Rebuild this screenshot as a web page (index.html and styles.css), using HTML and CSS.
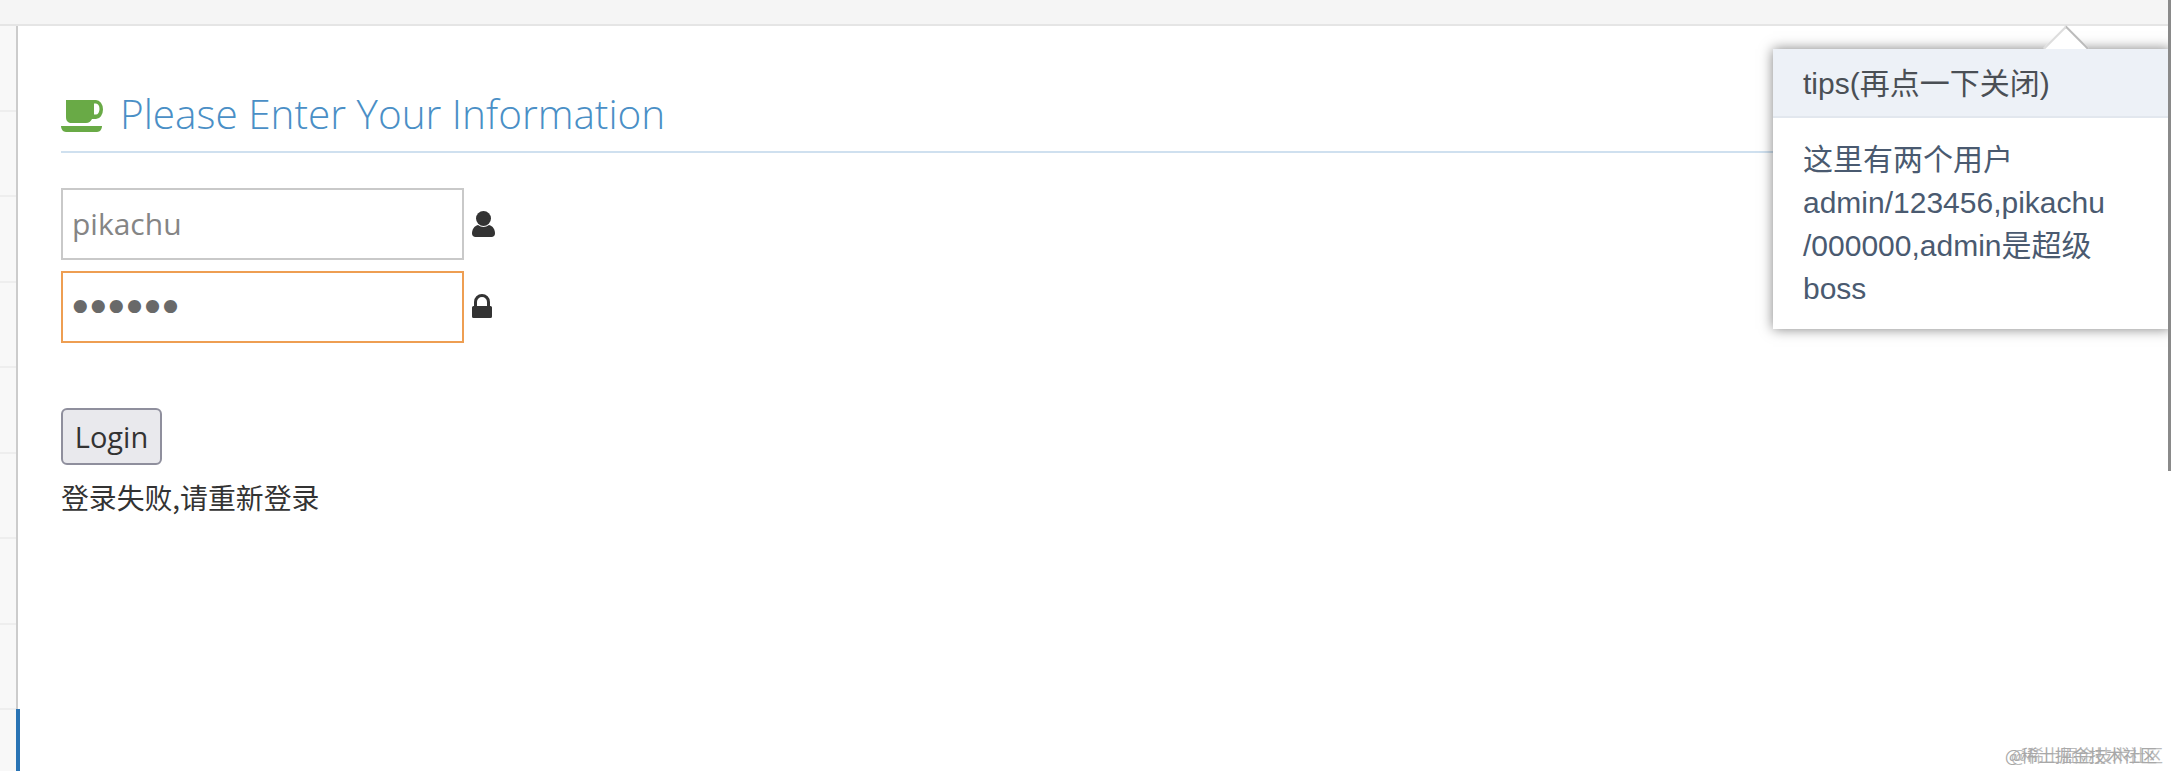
FILE: index.html
```html
<!DOCTYPE html>
<html lang="en">
<head>
  <meta charset="UTF-8">
  <meta name="viewport" content="width=device-width, initial-scale=1.0">
  <title>Login</title>
  <link rel="stylesheet" href="styles.css">
</head>
<body>

<div class="topbar"></div>

<div class="page">
  <div class="sidebar">
    <div class="side-row"></div>
    <div class="side-row"></div>
    <div class="side-row"></div>
    <div class="side-row"></div>
    <div class="side-row"></div>
    <div class="side-row"></div>
    <div class="side-row"></div>
    <div class="side-row"></div>
    <div class="side-active"></div>
  </div>

  <div class="content">
    <h4 class="title">
      <svg class="cup" viewBox="0 0 42 32">
        <path d="M5 0H35a7 9.500 0 0 1 0 19H31c-1.500 2.500-3 4-6 4H11c-4 0-6-2-6-6z M33 3.500V14.500h2a3.500 5.500 0 0 0 0-11z" fill-rule="evenodd"/>
        <path d="M0 26H41c0 3-2 6-5 6H5c-3 0-5-3-5-6z"/>
      </svg>
      <span>Please Enter Your Information</span>
    </h4>

    <form class="login">
      <label class="field">
        <input class="text-input" type="text" value="pikachu">
        <svg class="icon-user" viewBox="0 0 23 26">
          <circle cx="11.500" cy="7.500" r="7.500"/>
          <path d="M6 14c3.500 2.500 7.500 2.500 11 0 4 1 6 4.500 6 8.500 0 2-1.500 3.500-3.500 3.500h-16C1.500 26 0 24.500 0 22.500 0 18.500 2 15 6 14z"/>
        </svg>
      </label>
      <label class="field">
        <input class="text-input password" type="password" value="123456">
        <svg class="icon-lock" viewBox="0 0 20 24">
          <path d="M2 13V8a8 8 0 0 1 16 0v5h-3V8a5 5 0 0 0-10 0v5z"/>
          <path d="M1.500 12h17a1.500 1.500 0 0 1 1.500 1.500v9a1.500 1.500 0 0 1-1.500 1.500h-17A1.500 1.500 0 0 1 0 22.500v-9A1.500 1.500 0 0 1 1.500 12z"/>
        </svg>
      </label>
      <button class="login-btn" type="button">Login</button>
    </form>
    <p class="error">登录失败,请重新登录</p>
  </div>
</div>

<div class="popover">
  <div class="popover-arrow"></div>
  <div class="popover-title">tips(再点一下关闭)</div>
  <div class="popover-body">这里有两个用户admin/123456,pikachu /000000,admin是超级boss</div>
</div>

<div class="scrollbar"></div>

<div class="watermark">@稀土掘金技术社区</div>

</body>
</html>
```

FILE: styles.css
```css
* {
  box-sizing: border-box;
  margin: 0;
  padding: 0;
}

html, body {
  height: 100%;
  overflow: hidden;
}

body {
  background: #fff;
  font-family: "Open Sans", "Noto Sans CJK SC", sans-serif;
  color: #333;
  position: relative;
}

.topbar {
  height: 26px;
  background: #f5f5f5;
  border-bottom: 2px solid #e5e5e5;
}

.page {
  display: flex;
  height: 745px;
}

.sidebar {
  width: 18px;
  flex-shrink: 0;
  background: #f8f8f8;
  border-right: 2px solid #ccc;
  position: relative;
}

.side-row {
  height: 85.500px;
  border-bottom: 2px solid #eee;
}

.side-active {
  position: absolute;
  left: 16px;
  top: 683px;
  bottom: 0;
  width: 4px;
  background: #2a74b5;
}

.content {
  flex: 1;
  padding: 0 43px;
}

.title {
  display: flex;
  align-items: center;
  gap: 17px;
  height: 127px;
  padding-top: 65px;
  padding-bottom: 16px;
  border-bottom: 2px solid #cfe0ef;
  font-weight: 300;
  font-size: 40.500px;
  color: #4a8fc6;
}

.cup {
  width: 42px;
  height: 32px;
  fill: #69aa46;
  margin-top: 6px;
}

.login {
  padding-top: 35px;
}

.field {
  display: flex;
  align-items: center;
  margin-bottom: 11px;
}

.text-input {
  width: 403px;
  height: 72px;
  padding: 0 9px 2px;
  border: 2px solid #c9c9c9;
  background: #fff;
  outline: none;
  font-family: "Open Sans", sans-serif;
  font-size: 30px;
  color: #858585;
}

.password {
  padding: 0 4px;
  border-color: #ee9e52;
  font-family: "DejaVu Sans", sans-serif;
  font-size: 45px;
  letter-spacing: -8.500px;
  color: #696969;
}

.icon-user {
  width: 23px;
  height: 26px;
  margin-left: 8px;
  fill: #333;
}

.icon-lock {
  width: 20px;
  height: 24px;
  margin: -2px 0 0 8px;
  fill: #333;
}

.login-btn {
  display: block;
  width: 101px;
  height: 57px;
  margin-top: 65px;
  background: #e9e9ed;
  border: 2px solid #8f8f9d;
  border-radius: 6px;
  font-family: "Open Sans", sans-serif;
  font-size: 29px;
  color: #333;
}

.error {
  margin-top: 12px;
  font-family: "Noto Sans CJK SC", sans-serif;
  font-size: 27.850px;
  line-height: 40px;
  color: #333;
}

.popover {
  position: absolute;
  left: 1773px;
  top: 49px;
  width: 398px;
  height: 280px;
  background: #fff;
  box-shadow: 0 0 12px rgba(0, 0, 0, 0.5);
}

.popover-arrow {
  position: absolute;
  left: 277px;
  top: -17px;
  width: 32px;
  height: 32px;
  background: #fff;
  border-top: 2px solid #bbb;
  border-left: 2px solid #ddd;
  transform: rotate(45deg);
}

.popover-title {
  position: relative;
  height: 69px;
  padding: 0 30px;
  background: #edf1f7;
  border-bottom: 2px solid #e2e7ee;
  font-family: "Liberation Sans", "Noto Sans CJK SC", sans-serif;
  font-size: 30px;
  line-height: 69px;
  color: #4a4f55;
}

.popover-body {
  padding: 20px 30px;
  font-family: "Liberation Sans", "Noto Sans CJK SC", sans-serif;
  font-size: 30px;
  line-height: 43px;
  color: #4a5a70;
}

.scrollbar {
  position: absolute;
  right: 0;
  top: 0;
  width: 3px;
  height: 471px;
  background: #8a8a8a;
}

.watermark {
  position: absolute;
  right: 14px;
  bottom: 6px;
  font-family: "Noto Sans CJK SC", sans-serif;
  font-size: 17px;
  line-height: 20px;
  color: #a8a8a8;
  text-shadow: 6px 0 0 #bbb;
}
```
